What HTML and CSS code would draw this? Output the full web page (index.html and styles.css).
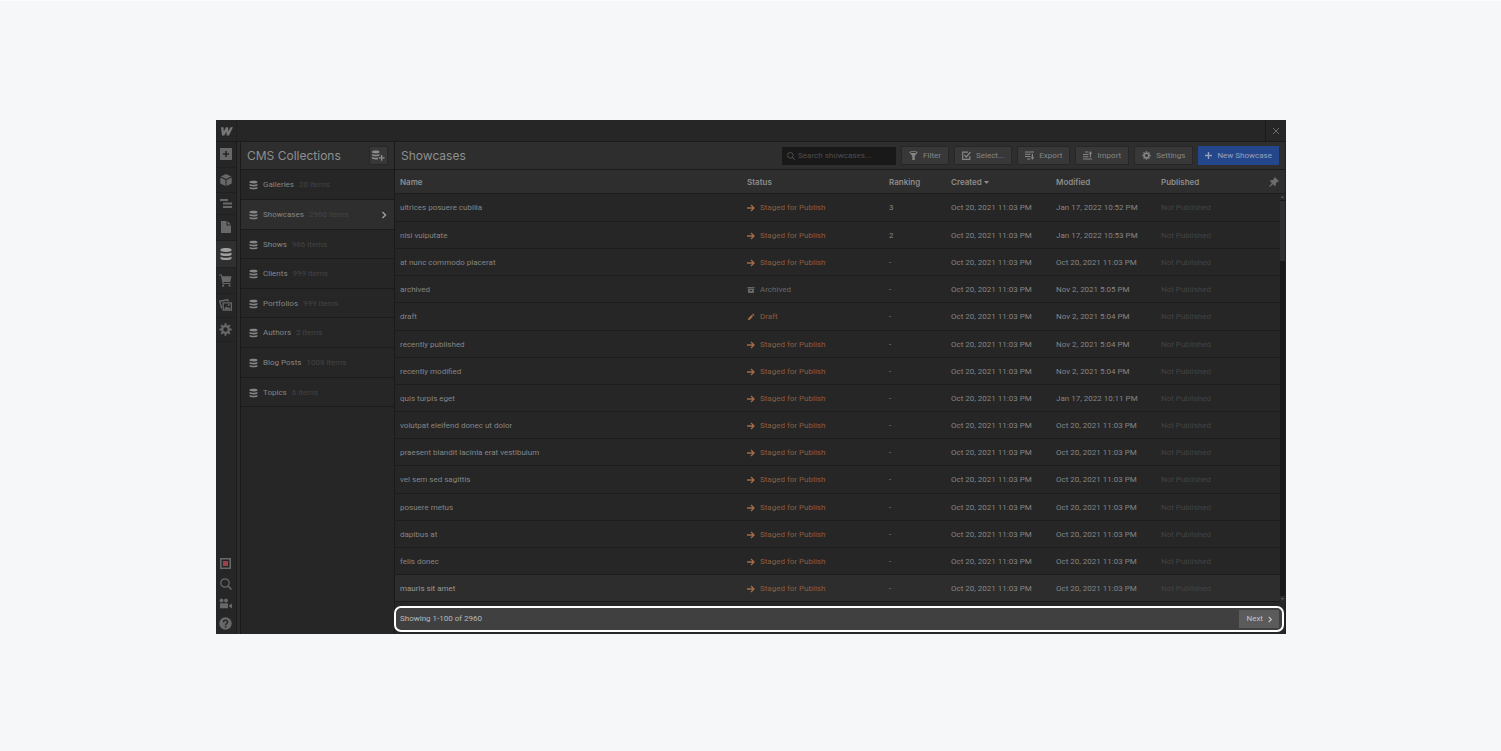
FILE: index.html
```html
<!DOCTYPE html>
<html lang="en">
<head>
<meta charset="utf-8">
<title>CMS Collections</title>
<link rel="stylesheet" href="styles.css">
</head>
<body>
<svg class="sprite" aria-hidden="true">
  <symbol id="db" viewBox="0 0 12 14"><path d="M.5 2.400C.5.400 11.500.400 11.500 2.400v1.200C11.500 5.300.5 5.300.5 3.600zM.5 5.500c2 1.300 9 1.300 11 0v2.300C11.500 9.500.5 9.500.5 7.800zM.5 9.700c2 1.300 9 1.300 11 0v1.900c0 2-11 2-11 0z"/></symbol>
  <symbol id="arrow" viewBox="0 0 8 8"><path d="M0 4h7M4 1l3 3-3 3" fill="none" stroke="currentColor" stroke-width="1.300"/></symbol>
  <symbol id="box" viewBox="0 0 8 8"><path d="M.5 1h7v1.400h-7zM1 3h6v4H1zM3 4v1h2V4z" fill-rule="evenodd"/></symbol>
  <symbol id="pencil" viewBox="0 0 8 8"><path d="M.8 7.300l.5-2 3.200-3.200 1.500 1.500-3.200 3.200zM5 1.600l1-1 1.500 1.500-1 1z"/></symbol>
  <symbol id="chev" viewBox="0 0 6 8"><path d="M1.500 1l3 3-3 3" fill="none" stroke="currentColor" stroke-width="1.400"/></symbol>
  <symbol id="gear" viewBox="0 0 14 14"><g fill="none" stroke="currentColor"><circle cx="7" cy="7" r="3.600" stroke-width="2.400"/><path d="M7 .4v2.400M7 11.200v2.400M.4 7h2.400M11.200 7h2.400M2.300 2.300L4 4M10 10l1.700 1.700M11.700 2.300L10 4M4 10l-1.700 1.700" stroke-width="2.200"/></g></symbol>
  <symbol id="search" viewBox="0 0 12 12"><path d="M8.300 8.300L11.500 11.500" stroke="currentColor" stroke-width="1.500"/><circle cx="5" cy="5" r="4.200" fill="none" stroke="currentColor" stroke-width="1.200"/></symbol>
</svg>
<div class="app">
  <header class="topbar">
    <a class="logo" href="#" aria-label="Home"><svg width="13" height="9" viewBox="0 0 13 9"><path d="M1 .3h2.500l.3 4.200L5.900.3h2.200l.4 4.200L10.400.3h2.500L9 8.500H6.700L6.300 4.700 4.300 8.500H2z"/></svg></a>
    <button class="close" aria-label="Close"><svg width="8" height="8" viewBox="0 0 8 8"><path d="M1 1l6 6M7 1L1 7" stroke="currentColor"/></svg></button>
  </header>
  <div class="body">
    <nav class="rail" aria-label="Tools">
      <button class="tool h26" aria-label="Add"><svg width="12" height="12" viewBox="0 0 12 12"><path d="M0 0h12v12H0zM5.200 3v2.200H3v1.600h2.200V9h1.600V6.800H9V5.200H6.800V3z" fill-rule="evenodd"/></svg></button>
      <button class="tool h25" aria-label="Symbols"><svg width="12" height="12" viewBox="0 0 12 12"><path d="M6 0l5.300 2.500L6 5 .7 2.500zM.3 3.500l5.200 2.400V12L.3 9.400zM11.700 3.500L6.500 5.900V12l5.200-2.600z"/></svg></button>
      <button class="tool h22" aria-label="Navigator"><svg width="12" height="9" viewBox="0 0 12 9"><path d="M0 0h8v2H0zM3 3.500h9v2H3zM3 7h9v2H3z"/></svg></button>
      <button class="tool h26" aria-label="Pages"><svg width="10" height="12" viewBox="0 0 10 12"><path d="M0 0h5.500v4.500H10V12H0zM6.500 0L10 3.500H6.500z"/></svg></button>
      <button class="tool h27 active" aria-label="CMS"><svg width="12" height="14"><use href="#db"/></svg></button>
      <button class="tool h26" aria-label="Ecommerce"><svg width="13" height="13" viewBox="0 0 13 13"><path d="M0 .5h2.800l.5 1.700H12.500L11.300 8H4.500l.2 1.100h6.800v1H3.600L2 1.500H0z"/><circle cx="4.200" cy="11.700" r="1.100"/><circle cx="10.500" cy="11.700" r="1.100"/></svg></button>
      <button class="tool h24" aria-label="Assets"><svg width="13" height="12" viewBox="0 0 13 12"><path d="M4.200 3.800h8.200v7.400H4.200z" fill="none" stroke="currentColor" stroke-width="1.300"/><path d="M5 10.500l2.200-3.200 1.600 1.600 1-1 2 2.600z"/><circle cx="9.700" cy="6" r="1"/><path d="M2.800 9.500L.7 2.200 8.800.8l.4 1.500" fill="none" stroke="currentColor" stroke-width="1.400"/></svg></button>
      <button class="tool h24" aria-label="Settings"><svg width="13" height="13"><use href="#gear"/></svg></button>
      <div class="rail-end">
        <button class="tool" aria-label="Audit"><svg width="11" height="11" viewBox="0 0 11 11"><path d="M.8.800h9.400v9.400H.8z" fill="none" stroke="currentColor" stroke-width="1.600"/><path class="red" d="M3 3h5v5H3z"/></svg></button>
        <button class="tool" aria-label="Search"><svg width="12" height="12"><use href="#search"/></svg></button>
        <button class="tool" aria-label="Video tutorials"><svg width="13" height="11" viewBox="0 0 13 11"><circle cx="2.500" cy="2.400" r="2"/><circle cx="7" cy="2.400" r="2"/><path d="M1 5.300h8v5H1zM10 7.400l3-2v5l-3-2z"/></svg></button>
        <button class="tool" aria-label="Help"><svg width="13" height="13" viewBox="0 0 13 13"><circle cx="6.500" cy="6.500" r="6.200"/><path class="cut" d="M4.500 5.200c0-2.600 4.100-2.500 4.100-.2 0 1.500-2 1.500-2 3.200M6.600 9.100v1.500"/></svg></button>
      </div>
    </nav>
    <aside class="side">
      <div class="bar side-bar">
        <h1 class="title">CMS Collections</h1>
        <button class="btn icon-btn" aria-label="New collection"><svg width="13" height="11" viewBox="0 0 13 11"><path d="M0 1.500C0 0 7.500 0 7.500 1.500v.8C7.500 3.800 0 3.800 0 2.300zM0 4c1.500 1 6 1 7.500 0v1.300c-.5 1.300-7.500 1.300-7.500 0zM0 7c1.500.8 4 .8 6 .5v1.800c-3 .4-6 .1-6-1zM9 5h1.300v2.200h2.200v1.300h-2.200v2.200H9V8.500H6.800V7.200H9z"/></svg></button>
      </div>
      <ul class="collections">
        <li><a href="#" class="coll"><svg class="db"><use href="#db"/></svg>Galleries<span class="count">20 items</span></a></li>
        <li><a href="#" class="coll selected"><svg class="db"><use href="#db"/></svg>Showcases<span class="count">2960 items</span><svg class="go"><use href="#chev"/></svg></a></li>
        <li><a href="#" class="coll short"><svg class="db"><use href="#db"/></svg>Shows<span class="count">986 items</span></a></li>
        <li><a href="#" class="coll"><svg class="db"><use href="#db"/></svg>Clients<span class="count">999 items</span></a></li>
        <li><a href="#" class="coll short"><svg class="db"><use href="#db"/></svg>Portfolios<span class="count">999 items</span></a></li>
        <li><a href="#" class="coll"><svg class="db"><use href="#db"/></svg>Authors<span class="count">2 items</span></a></li>
        <li><a href="#" class="coll"><svg class="db"><use href="#db"/></svg>Blog Posts<span class="count">1008 items</span></a></li>
        <li><a href="#" class="coll short"><svg class="db"><use href="#db"/></svg>Topics<span class="count">6 items</span></a></li>
      </ul>
    </aside>
    <main class="main">
      <div class="bar main-bar">
        <h2 class="title">Showcases</h2>
        <label class="search"><svg width="8" height="8"><use href="#search"/></svg><input type="search" placeholder="Search showcases..." aria-label="Search showcases"></label>
        <button class="btn"><svg class="ic" viewBox="0 0 9 9"><path d="M.3 1.200C.3-.2 8.700-.2 8.700 1.200L5.700 5v4H3.300V5z"/><path class="slot" d="M1.800 1.500h5.400"/></svg>Filter</button>
        <button class="btn"><svg class="ic" viewBox="0 0 9 9"><path d="M7.800 5v3.300H.7V1.200H6M2.500 4l1.800 2L8.500 1" fill="none" stroke="currentColor" stroke-width="1.200"/></svg>Select...</button>
        <button class="btn"><svg class="ic" viewBox="0 0 9 9"><path d="M0 .5h9v1H0zM0 2.800h5.500v1H0zM0 5.100h5.500v1H0zM2 7.400h3.500v1H2zM6.800 2.800H8v3.500h1.200L7.400 9 5.800 6.300h1z"/></svg>Export</button>
        <button class="btn"><svg class="ic" viewBox="0 0 9 9"><path d="M0 7.500h9v1H0zM0 5.200h5.500v1H0zM0 2.900h5.500v1H0zM2 .6h3.500v1H2zM6.800 6.200H8V2.800h1.200L7.400 0 5.800 2.800h1z"/></svg>Import</button>
        <button class="btn"><svg class="ic"><use href="#gear"/></svg>Settings</button>
        <button class="btn primary"><svg class="ic plus" viewBox="0 0 7 7"><path d="M3.500 0v7M0 3.500h7" stroke="currentColor" stroke-width="1.400"/></svg>New Showcase</button>
      </div>
      <div class="grid">
        <table class="items">
          <colgroup><col><col class="c-status"><col class="c-rank"><col class="c-date"><col class="c-date"><col class="c-pub"></colgroup>
          <thead><tr><th>Name</th><th>Status</th><th>Ranking</th><th>Created <svg class="sort" viewBox="0 0 5 3"><path d="M0 0h5L2.500 3z"/></svg></th><th>Modified</th><th><span class="last">Published<button class="pin" aria-label="Pin columns"><svg width="10" height="10" viewBox="0 0 10 10"><path d="M5.800 0L10 4.200l-1 .7-.6-.2L7 6.200l-.2 2.100-.9.900-2-2L.6 10 0 9.400l2.800-3.300-2-2 .9-.9 2.100-.2L5.300 1.600 5.100 1z"/></svg></button></span></th></tr></thead>
          <tbody>
            <tr class="tall"><td>ultrices posuere cubilia</td><td><span class="st"><svg><use href="#arrow"/></svg>Staged for Publish</span></td><td>3</td><td>Oct 20, 2021 11:03 PM</td><td>Jan 17, 2022 10:52 PM</td><td>Not Published</td></tr>
            <tr><td>nisi vulputate</td><td><span class="st"><svg><use href="#arrow"/></svg>Staged for Publish</span></td><td>2</td><td>Oct 20, 2021 11:03 PM</td><td>Jan 17, 2022 10:53 PM</td><td>Not Published</td></tr>
            <tr><td>at nunc commodo placerat</td><td><span class="st"><svg><use href="#arrow"/></svg>Staged for Publish</span></td><td>-</td><td>Oct 20, 2021 11:03 PM</td><td>Oct 20, 2021 11:03 PM</td><td>Not Published</td></tr>
            <tr><td>archived</td><td><span class="st archived"><svg><use href="#box"/></svg>Archived</span></td><td>-</td><td>Oct 20, 2021 11:03 PM</td><td>Nov 2, 2021 5:05 PM</td><td>Not Published</td></tr>
            <tr class="tall"><td>draft</td><td><span class="st"><svg><use href="#pencil"/></svg>Draft</span></td><td>-</td><td>Oct 20, 2021 11:03 PM</td><td>Nov 2, 2021 5:04 PM</td><td>Not Published</td></tr>
            <tr><td>recently published</td><td><span class="st"><svg><use href="#arrow"/></svg>Staged for Publish</span></td><td>-</td><td>Oct 20, 2021 11:03 PM</td><td>Nov 2, 2021 5:04 PM</td><td>Not Published</td></tr>
            <tr><td>recently modified</td><td><span class="st"><svg><use href="#arrow"/></svg>Staged for Publish</span></td><td>-</td><td>Oct 20, 2021 11:03 PM</td><td>Nov 2, 2021 5:04 PM</td><td>Not Published</td></tr>
            <tr><td>quis turpis eget</td><td><span class="st"><svg><use href="#arrow"/></svg>Staged for Publish</span></td><td>-</td><td>Oct 20, 2021 11:03 PM</td><td>Jan 17, 2022 10:11 PM</td><td>Not Published</td></tr>
            <tr><td>volutpat eleifend donec ut dolor</td><td><span class="st"><svg><use href="#arrow"/></svg>Staged for Publish</span></td><td>-</td><td>Oct 20, 2021 11:03 PM</td><td>Oct 20, 2021 11:03 PM</td><td>Not Published</td></tr>
            <tr><td>praesent blandit lacinia erat vestibulum</td><td><span class="st"><svg><use href="#arrow"/></svg>Staged for Publish</span></td><td>-</td><td>Oct 20, 2021 11:03 PM</td><td>Oct 20, 2021 11:03 PM</td><td>Not Published</td></tr>
            <tr class="tall"><td>vel sem sed sagittis</td><td><span class="st"><svg><use href="#arrow"/></svg>Staged for Publish</span></td><td>-</td><td>Oct 20, 2021 11:03 PM</td><td>Oct 20, 2021 11:03 PM</td><td>Not Published</td></tr>
            <tr><td>posuere metus</td><td><span class="st"><svg><use href="#arrow"/></svg>Staged for Publish</span></td><td>-</td><td>Oct 20, 2021 11:03 PM</td><td>Oct 20, 2021 11:03 PM</td><td>Not Published</td></tr>
            <tr><td>dapibus at</td><td><span class="st"><svg><use href="#arrow"/></svg>Staged for Publish</span></td><td>-</td><td>Oct 20, 2021 11:03 PM</td><td>Oct 20, 2021 11:03 PM</td><td>Not Published</td></tr>
            <tr><td>felis donec</td><td><span class="st"><svg><use href="#arrow"/></svg>Staged for Publish</span></td><td>-</td><td>Oct 20, 2021 11:03 PM</td><td>Oct 20, 2021 11:03 PM</td><td>Not Published</td></tr>
            <tr class="hover"><td>mauris sit amet</td><td><span class="st"><svg><use href="#arrow"/></svg>Staged for Publish</span></td><td>-</td><td>Oct 20, 2021 11:03 PM</td><td>Oct 20, 2021 11:03 PM</td><td>Not Published</td></tr>
          </tbody>
        </table>
        <div class="scroll" aria-hidden="true">
          <span class="cap"><svg width="3" height="2" viewBox="0 0 3 2"><path d="M0 2h3L1.500 0z"/></svg></span>
          <span class="thumb"></span>
          <span class="cap end"><svg width="3" height="2" viewBox="0 0 3 2"><path d="M0 0h3L1.500 2z"/></svg></span>
        </div>
      </div>
      <footer class="pager">
        <span>Showing 1-100 of 2960</span>
        <button class="next">Next<svg width="6" height="7"><use href="#chev"/></svg></button>
      </footer>
    </main>
  </div>
</div>
</body>
</html>
```
FILE: styles.css
```css
* { box-sizing: border-box; }
body {
  margin: 0;
  min-height: 100vh;
  padding: 119px 215px 117px 216px;
  border-top: 1px solid #fdfdfe;
  background: #f5f7f9;
  color: #858585;
  font: 8px/12px Roboto, "Liberation Sans", sans-serif;
}
button, input { font: inherit; color: inherit; }
button { border: 0; background: none; padding: 0; }
a { color: inherit; text-decoration: none; }
svg { fill: currentColor; flex: none; display: block; }
.sprite { position: absolute; width: 0; height: 0; }

.app { background: #262626; }
.topbar {
  display: flex;
  justify-content: space-between;
  height: 22px;
  border-bottom: 1px solid #1b1b1b;
}
.logo { display: grid; place-items: center; width: 21px; padding-top: 1px; border-right: 1px solid #202020; color: #777; }
.close { display: grid; place-items: center; width: 21px; border-left: 1px solid #1b1b1b; color: #6c6c6c; }
.body { display: flex; }

.rail { display: flex; flex-direction: column; width: 21px; border-right: 1px solid #1c1c1c; color: #686868; }
.tool { display: grid; place-items: center; width: 20px; height: 20px; padding: 0 1px 1px 0; border-bottom: 1px solid #202020; }
.h22 { height: 22px; }
.h24 { height: 24px; }
.h25 { height: 25px; }
.h26 { height: 26px; }
.h27 { height: 27px; }
.active { background: #303030; color: #a0a0a0; }
.rail-end { margin-top: auto; }
.rail-end .tool { border: 0; }
.red { fill: #a04048; }
.cut { fill: none; stroke: #262626; stroke-width: 1.5; }

.side { width: 158px; border-left: 3px solid #2c2c2c; border-right: 1px solid #1a1a1a; box-shadow: inset 1px 0 #1a1a1a; }
.bar { display: flex; align-items: center; height: 28px; border-bottom: 1px solid #1b1b1b; background: #2e2e2e; }
.side-bar { justify-content: space-between; margin-left: 1px; padding: 0 6px; }
.title { margin: 0; font-family: Inter, "Liberation Sans", sans-serif; font-size: 12px; line-height: 16px; font-weight: 400; color: #8e8e8e; }
.btn {
  display: flex;
  align-items: center;
  gap: 5px;
  height: 19px;
  padding: 0 7px;
  border: 1px solid #272727;
  background: #383838;
  color: #868686;
  white-space: nowrap;
}
.icon-btn { padding: 0 2px; color: #8c8c8c; }
.ic { width: 9px; height: 9px; }
.slot { stroke: #383838; stroke-width: 1; }
.collections { list-style: none; margin: 0 0 0 1px; padding: 0; }
.coll { display: flex; align-items: center; height: 30px; padding: 1px 7px 0 8px; border-bottom: 1px solid #1b1b1b; }
.short { height: 29px; }
.selected { background: #2e2e2e; }
.db { width: 9px; height: 10px; margin-right: 5px; }
.count { margin-left: 5px; color: #444; }
.go { width: 6px; height: 8px; margin-left: auto; color: #a0a0a0; }

.main { flex: 1; min-width: 0; display: flex; flex-direction: column; border-right: 1px solid #222; }
.main-bar { gap: 5px; padding: 0 6px; }
.main-bar .title { margin-right: auto; }
.search { display: flex; align-items: center; gap: 3px; width: 114px; height: 18px; padding: 0 5px; background: #191919; color: #5c5c5c; }
.search input { flex: 1; min-width: 0; padding: 0; border: 0; background: none; outline: 0; }
.search input::placeholder { color: #4d4d4d; opacity: 1; }
.btn.primary { padding: 0 6px; border-color: #24478c; background: #24478c; color: #95a1bb; }
.plus { width: 7px; height: 7px; }

.grid { position: relative; }
.items { width: 100%; table-layout: fixed; border-spacing: 0; }
.c-status { width: 142px; }
.c-rank { width: 62px; }
.c-date { width: 105px; }
.c-pub { width: 129px; }
.items th, .items td { padding: 0 0 0 5px; text-align: left; border-bottom: 1px solid #1c1c1c; white-space: nowrap; }
.items th { height: 24px; background: #2e2e2e; color: #8c8c8c; font-family: Inter, "Liberation Sans", sans-serif; font-weight: 600; }
.items td { height: 27px; padding-top: 1px; }
.items .tall td { height: 28px; }
.items td:last-child { color: #434343; }
.items .hover td { background: #2d2d2d; }
.hover td:first-child { color: #989898; }
.sort { display: inline-block; width: 5px; height: 3px; vertical-align: middle; }
.last { display: flex; align-items: center; justify-content: space-between; padding-right: 6px; }
.pin { color: #6c6c6c; }
.st { display: flex; align-items: center; gap: 5px; color: #8c5d3f; }
.st svg { width: 8px; height: 8px; color: #a46c47; }
.st.archived, .st.archived svg { color: #666; }
.scroll { position: absolute; top: 24px; right: 0; bottom: 0; display: flex; flex-direction: column; width: 5px; background: #191919; }
.cap { display: grid; place-items: center; height: 6px; background: #292929; color: #606060; }
.thumb { height: 60px; margin-top: 1px; background: #303030; }
.end { margin-top: auto; }

.pager {
  position: relative;
  display: flex;
  align-items: center;
  justify-content: space-between;
  height: 26px;
  margin: 4px 1px 2px -1px;
  padding: 0 3px 0 4px;
  border: 2px solid #fff;
  border-radius: 7px;
  background: #404040;
  color: #bababa;
}
.next { display: flex; align-items: center; gap: 4px; height: 18px; padding: 0 6px 0 7px; background: #5b5b5b; color: #c4c4c4; }
```
